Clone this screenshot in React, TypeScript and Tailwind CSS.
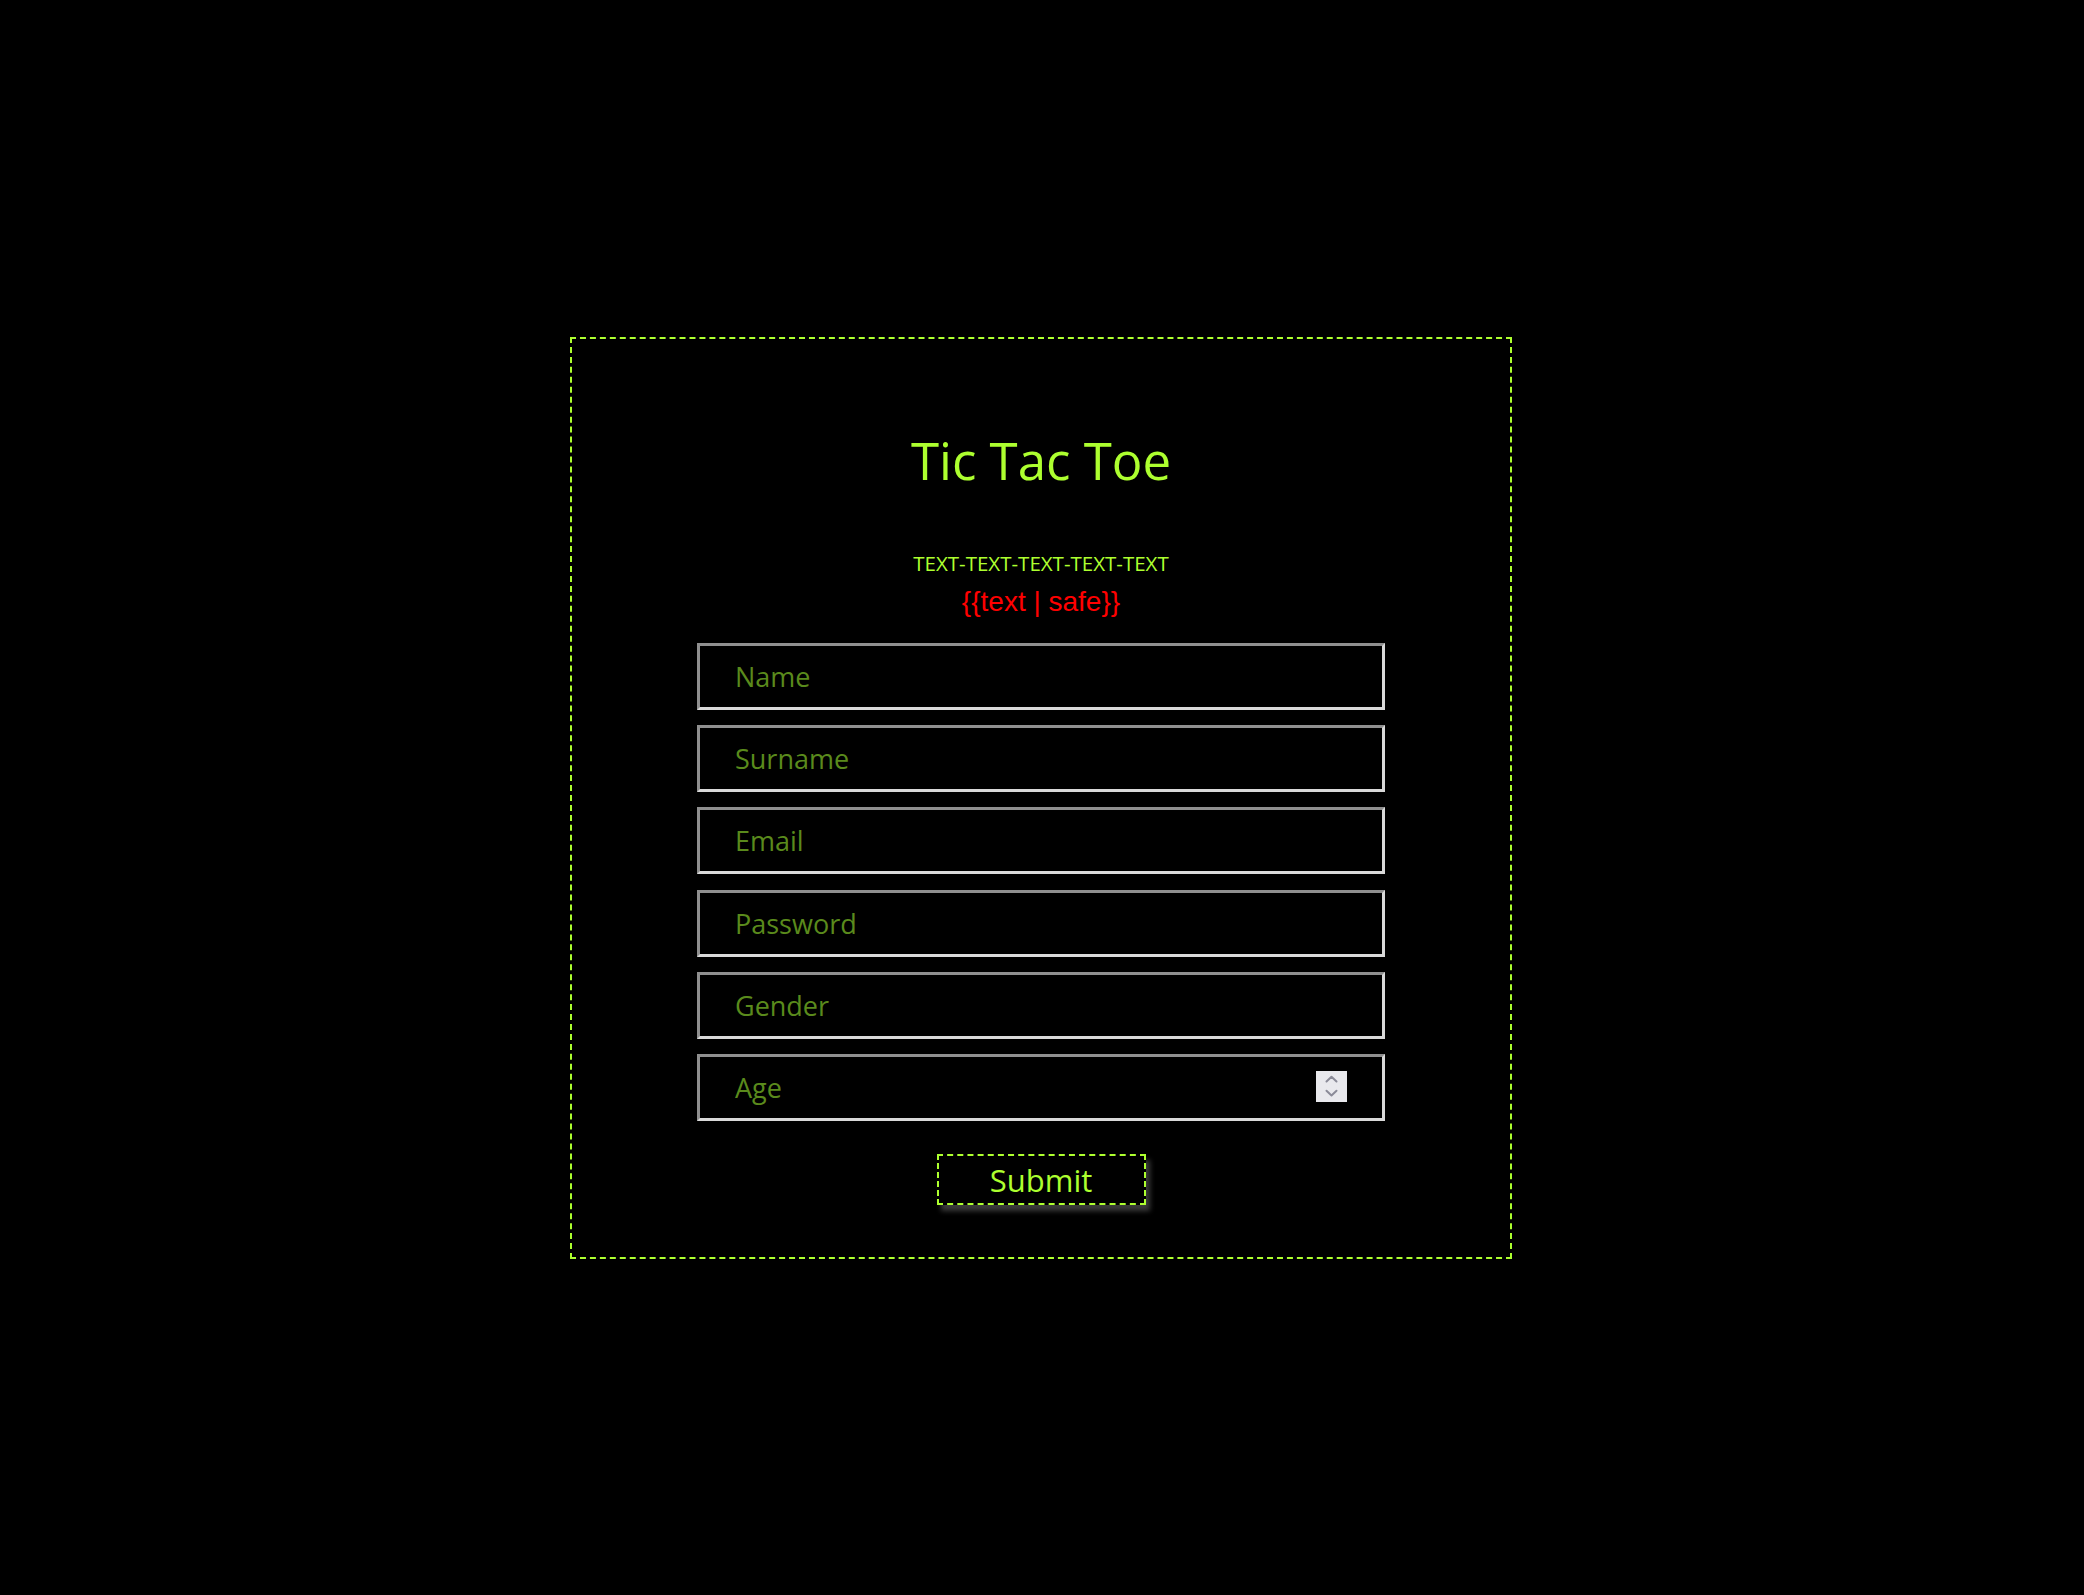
import React from "react";

const fields = ["Name", "Surname", "Email", "Password", "Gender"];

function Spinner() {
  return (
    <div className="absolute right-[38px] top-[17px] w-[31px] h-[31px] bg-[#e9e9ed]">
      <svg width="31" height="31" viewBox="0 0 31 31" fill="none">
        <path d="M10.5 10.5 L15.5 5.8 L20.5 10.5" stroke="#8b8b98" strokeWidth="2" strokeLinecap="round" strokeLinejoin="round" />
        <path d="M10.5 19.8 L15.5 24.5 L20.5 19.8" stroke="#8b8b98" strokeWidth="2" strokeLinecap="round" strokeLinejoin="round" />
      </svg>
    </div>
  );
}

function Field({ placeholder, spinner }: { placeholder: string; spinner?: boolean }) {
  return (
    <div className="relative w-[688px] h-[67px]">
      <input
        type="text"
        placeholder={placeholder}
        className="w-full h-full bg-black border-[3px] border-solid border-t-[#8f8f8f] border-l-[#8f8f8f] border-b-[#d9d9d9] border-r-[#d9d9d9] pl-[35px] text-[27px] text-[#adff2f] placeholder:text-[#5a8a1c] outline-none font-['Open_Sans',sans-serif]"
      />
      {spinner && <Spinner />}
    </div>
  );
}

export default function App() {
  return (
    <div className="min-h-screen w-full bg-black flex items-center justify-center font-['Open_Sans',sans-serif]">
      <div className="mr-[2px] w-[942px] h-[922px] border-2 border-dashed border-[#adff2f] flex flex-col items-center pt-[86px]">
        <h1 className="text-[51px] leading-[70px] text-[#adff2f] font-normal">Tic Tac Toe</h1>
        <p className="mt-[54px] text-[20.5px] leading-[28px] text-[#adff2f]">TEXT-TEXT-TEXT-TEXT-TEXT</p>
        <p className="mt-[9px] text-[28px] leading-[32px] text-[#ff0000] font-['Liberation_Sans',Arial,sans-serif]">
          {"{{text | safe}}"}
        </p>
        <div className="mt-[25px] flex flex-col gap-[15.4px]">
          {fields.map((f) => (
            <Field key={f} placeholder={f} />
          ))}
          <Field placeholder="Age" spinner />
        </div>
        <button
          type="button"
          className="mt-[33px] w-[209px] h-[51px] border-2 border-dashed border-[#adff2f] bg-black text-[31px] text-[#adff2f] flex items-center justify-center shadow-[4px_6px_5px_rgba(70,70,70,0.85)] font-['Open_Sans',sans-serif]"
        >
          Submit
        </button>
      </div>
    </div>
  );
}
